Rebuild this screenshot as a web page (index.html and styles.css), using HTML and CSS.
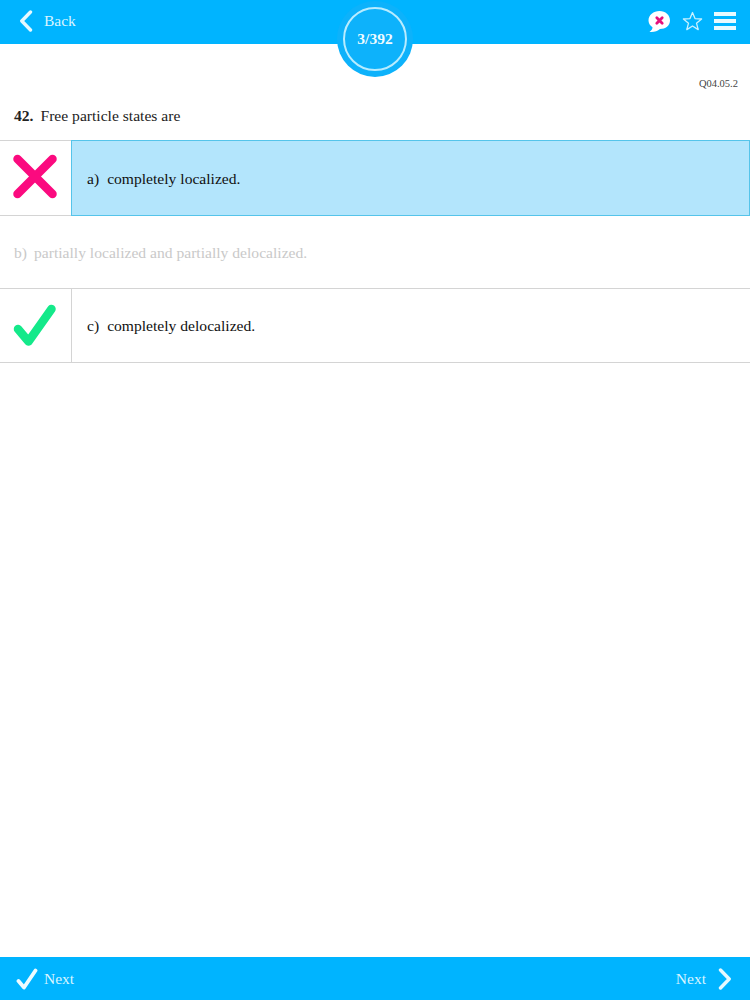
FILE: index.html
```html
<!DOCTYPE html>
<html lang="en">
<head>
<meta charset="utf-8">
<title>Question 3/392</title>
<link rel="stylesheet" href="styles.css">
</head>
<body>
<div class="page">
  <header class="topbar">
    <div class="nav-left">
      <svg class="chev" width="14" height="22" viewBox="0 0 14 22"><path d="M11.500 2 L2.800 11 L11.500 20" fill="none" stroke="#e6f9ff" stroke-width="3.400" stroke-linecap="round" stroke-linejoin="round"/></svg>
      <span class="nav-text">Back</span>
    </div>
    <div class="nav-right">
      <svg width="24" height="23" viewBox="0 0 24 23"><path d="M12.500 1 C18.500 1 23 5 23 10.500 C23 15.500 18.500 19 13 19 C10.500 21 7 22.500 2.500 22 C4.500 20.500 5.500 19 5.500 17.300 C2.800 15.500 1.500 13 1.500 10.500 C1.500 5 6.500 1 12.500 1 Z" fill="#fff"/><path d="M9.800 7.800 L15.200 13.200 M15.200 7.800 L9.800 13.200" stroke="#e5127d" stroke-width="2.800" stroke-linecap="round"/></svg>
      <svg width="21" height="20" viewBox="0 0 21 20"><path d="M10.500 1.500 L13 7.600 L19.600 8 L14.500 12.200 L16.200 18.600 L10.500 15 L4.800 18.600 L6.500 12.200 L1.400 8 L8 7.600 Z" fill="none" stroke="#c9f1ff" stroke-width="1.300" stroke-linejoin="round"/></svg>
      <div class="menu"><span></span><span></span><span></span></div>
    </div>
    <div class="counter"><div class="counter-ring">3/392</div></div>
  </header>

  <main class="content">
    <div class="code">Q04.05.2</div>
    <p class="question"><b>42.</b><span>Free particle states are</span></p>
    <div class="answers">
      <div class="answer selected">
        <div class="mark">
          <svg width="46" height="46" viewBox="0 0 46 46"><path d="M5.500 5 L40.500 40 M40.500 5 L5.500 40" stroke="#fb0a7f" stroke-width="8.500" stroke-linecap="round"/></svg>
        </div>
        <div class="body"><span class="letter">a)</span>completely localized.</div>
      </div>
      <div class="answer dim">
        <div class="body"><span class="letter">b)</span>partially localized and partially delocalized.</div>
      </div>
      <div class="answer last">
        <div class="mark">
          <svg width="46" height="46" viewBox="0 0 46 46"><path d="M6 26 L16.500 38.500 L39.500 6" fill="none" stroke="#14e98a" stroke-width="8.500" stroke-linecap="round" stroke-linejoin="round"/></svg>
        </div>
        <div class="body"><span class="letter">c)</span>completely delocalized.</div>
      </div>
    </div>
  </main>

  <footer class="bottombar">
    <div class="nav-left foot-left">
      <svg width="22" height="22" viewBox="0 0 22 22"><path d="M2.500 13 L8 19.500 L19.500 2.500" fill="none" stroke="#eefbff" stroke-width="3.800" stroke-linecap="round" stroke-linejoin="round"/></svg>
      <span class="nav-text">Next</span>
    </div>
    <div class="nav-left foot-right">
      <span class="nav-text">Next</span>
      <svg width="14" height="22" viewBox="0 0 14 22"><path d="M2.500 2 L11.200 11 L2.500 20" fill="none" stroke="#e6f9ff" stroke-width="3.400" stroke-linecap="round" stroke-linejoin="round"/></svg>
    </div>
  </footer>
</div>
</body>
</html>
```

FILE: styles.css
```css
* { box-sizing: border-box; }
html, body { margin: 0; padding: 0; background: #fff; }
body { font-family: "Liberation Serif", "Times New Roman", serif; color: #222; }
.page { width: 750px; height: 1000px; display: flex; flex-direction: column; overflow: hidden; }

.topbar {
  position: relative;
  flex: 0 0 44px;
  background: #00b4ff;
  display: flex;
  align-items: center;
  justify-content: space-between;
  padding: 0 14px 2px 19px;
}
.nav-left { display: flex; align-items: center; }
.nav-text { color: #d9f5ff; font-size: 15.500px; }
.topbar .nav-text { margin-left: 11px; }
.nav-right { display: flex; align-items: center; gap: 11px; }
.menu { display: flex; flex-direction: column; gap: 3px; width: 22px; }
.menu span { display: block; height: 4px; background: #e8faff; }

.counter {
  position: absolute;
  left: 337px;
  top: 1px;
  width: 76px;
  height: 76px;
  border-radius: 50%;
  background: #0db2fb;
  display: flex;
  align-items: center;
  justify-content: center;
}
.counter-ring {
  width: 64px;
  height: 64px;
  border-radius: 50%;
  border: 2px solid #b8ecff;
  color: #f0fbff;
  font-size: 15.500px;
  font-weight: bold;
  display: flex;
  align-items: center;
  justify-content: center;
}

.content { flex: 1; display: flex; flex-direction: column; }
.code { font-size: 10.500px; color: #444; text-align: right; padding: 34px 12px 0 0; line-height: 12px; }
.question { margin: 17px 0 0; padding-left: 14px; font-size: 15.600px; line-height: 18px; height: 33px; color: #222; }
.question b { margin-right: 7px; }

.answers { border-top: 1px solid #d4d4d4; }
.answer { display: flex; height: 73px; border-bottom: 1px solid #d4d4d4; font-size: 15.600px; color: #111; }
.selected { height: 75px; }
.last { height: 74px; }
.mark { flex: 0 0 72px; display: flex; align-items: center; justify-content: center; border-right: 1px solid #d4d4d4; padding-right: 1px; }
.selected .mark { border-right: 0; flex-basis: 71px; padding-bottom: 2px; }
.body { flex: 1; display: flex; align-items: center; padding: 1px 0 0 14px; }
.letter { margin-right: 8px; }
.selected .body { background: #b3e5fc; border: 1px solid #55c4ea; margin: -1px 0 -1px 0; padding-left: 15px; }
.last .body { padding-left: 15px; }
.dim .body { color: #c9c9c9; }
.dim .letter { margin-right: 7px; }

.bottombar {
  flex: 0 0 43px;
  background: #00b4ff;
  display: flex;
  align-items: center;
  justify-content: space-between;
  padding: 0 18px 0 16px;
}
.foot-left .nav-text { margin-left: 6px; }
.foot-right .nav-text { margin-right: 12px; }
```
